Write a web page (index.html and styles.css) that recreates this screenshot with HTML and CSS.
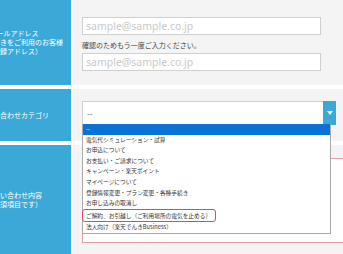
FILE: index.html
```html
<!DOCTYPE html>
<html lang="ja">

<head>
    <meta charset="UTF-8">
    <meta name="viewport" content="width=device-width, initial-scale=1.0">
    <title>お問い合わせ</title>
    <link rel="stylesheet" href="styles.css">
</head>

<body>
    <div class="form">
        <!-- メールアドレス -->
        <div class="row">
            <div class="label">メールアドレス<br>（楽天でんきをご利用のお客様<br>ご登録アドレス）</div>
            <div class="field field-mail">
                <input class="text-input" type="text" placeholder="sample@sample.co.jp">
                <p class="note">確認のためもう一度ご入力ください。</p>
                <input class="text-input" type="text" placeholder="sample@sample.co.jp">
            </div>
        </div>
        <!-- カテゴリ -->
        <div class="row">
            <div class="label">お問い合わせカテゴリ</div>
            <div class="field field-category">
                <div class="select-wrap">
                    <select class="select">
                        <option>--</option>
                    </select>
                    <span class="select-arrow"></span>
                </div>
                <ul class="options">
                    <li class="option active">--</li>
                    <li class="option">電気代シミュレーション・試算</li>
                    <li class="option">お申込について</li>
                    <li class="option">お支払い・ご請求について</li>
                    <li class="option">キャンペーン・楽天ポイント</li>
                    <li class="option">マイページについて</li>
                    <li class="option">登録情報変更・プラン変更・各種手続き</li>
                    <li class="option">お申し込みの取消し</li>
                    <li class="option"><span class="mark">ご解約、お引越し（ご利用場所の電気を止める）</span></li>
                    <li class="option">法人向け（楽天でんきBusiness）</li>
                </ul>
            </div>
        </div>
        <!-- 内容 -->
        <div class="row">
            <div class="label">お問い合わせ内容<br>（必須項目です）</div>
            <div class="field field-body">
                <textarea class="textarea"></textarea>
            </div>
        </div>
    </div>
</body>

</html>
```
FILE: styles.css
```css
body {
    margin: 0;
    background-color: #fff;
    font-family: "Noto Sans CJK JP", "Noto Sans", sans-serif;
    overflow: hidden;
}

.form {
    display: flex;
    flex-direction: column;
    gap: 4px;
    width: 386px;
    margin-left: -43px;
}

.row {
    display: flex;
    gap: 2px;
}

.label {
    flex: none;
    display: flex;
    align-items: center;
    justify-content: center;
    width: 114px;
    background-color: #3ba9d8;
    color: #fff;
    font-size: 7px;
    line-height: 9px;
    text-align: center;
    white-space: nowrap;
}

.field {
    flex: 1;
    position: relative;
    padding-left: 9px;
    background-color: #f4f4f4;
}

.field-mail {
    padding-top: 17px;
    padding-bottom: 14px;
}

.text-input {
    display: block;
    box-sizing: border-box;
    width: 239px;
    height: 18px;
    margin: 0;
    padding: 0 3px;
    border: 1px solid #cfcfcf;
    background-color: #fff;
    font-family: "Noto Sans", "Noto Sans CJK JP", sans-serif;
    font-size: 10.5px;
}

.text-input::placeholder {
    color: #c9c9c9;
}

.note {
    margin: 5px 0 3px;
    font-size: 7px;
    line-height: 10px;
    color: #444;
}

.field-category {
    padding-top: 12px;
    padding-bottom: 16px;
}

.select-wrap {
    display: flex;
    width: 254px;
    height: 24px;
}

.select {
    flex: 1;
    appearance: none;
    margin: 0;
    padding: 0 4px;
    border: 1px solid #cfcfcf;
    border-right: none;
    border-radius: 0;
    background-color: #fff;
    color: #555;
    font-size: 8px;
    font-family: inherit;
}

.select-arrow {
    width: 13px;
    display: flex;
    align-items: center;
    justify-content: center;
    background-color: #3ba9d8;
}

.select-arrow::after {
    content: "";
    border-top: 4px solid #fff;
    border-left: 3px solid transparent;
    border-right: 3px solid transparent;
}

/* 開いた状態のリスト */
.options {
    position: absolute;
    top: 35px;
    left: 9px;
    z-index: 2;
    box-sizing: border-box;
    width: 249px;
    margin: 0;
    padding: 0 0 1px;
    list-style: none;
    background-color: #fff;
    border: 1px solid #a9a9a9;
    border-top: none;
}

.option {
    padding-left: 3px;
    font-size: 5.7px;
    line-height: 10.6px;
    color: #333;
    white-space: nowrap;
}

.option.active {
    background-color: #0a72d4;
    color: #fff;
}

.mark {
    display: inline-block;
    margin-left: -4px;
    padding: 0 4px 0 3px;
    line-height: 11px;
    border: 1.5px solid #d8477c;
    border-radius: 3px;
}

.field-body {
    padding-top: 13px;
    padding-bottom: 11px;
}

.textarea {
    display: block;
    box-sizing: border-box;
    width: 290px;
    height: 85px;
    margin: 0;
    border: 1.5px solid #e79ca8;
    background-color: #fff;
    resize: none;
}
```
